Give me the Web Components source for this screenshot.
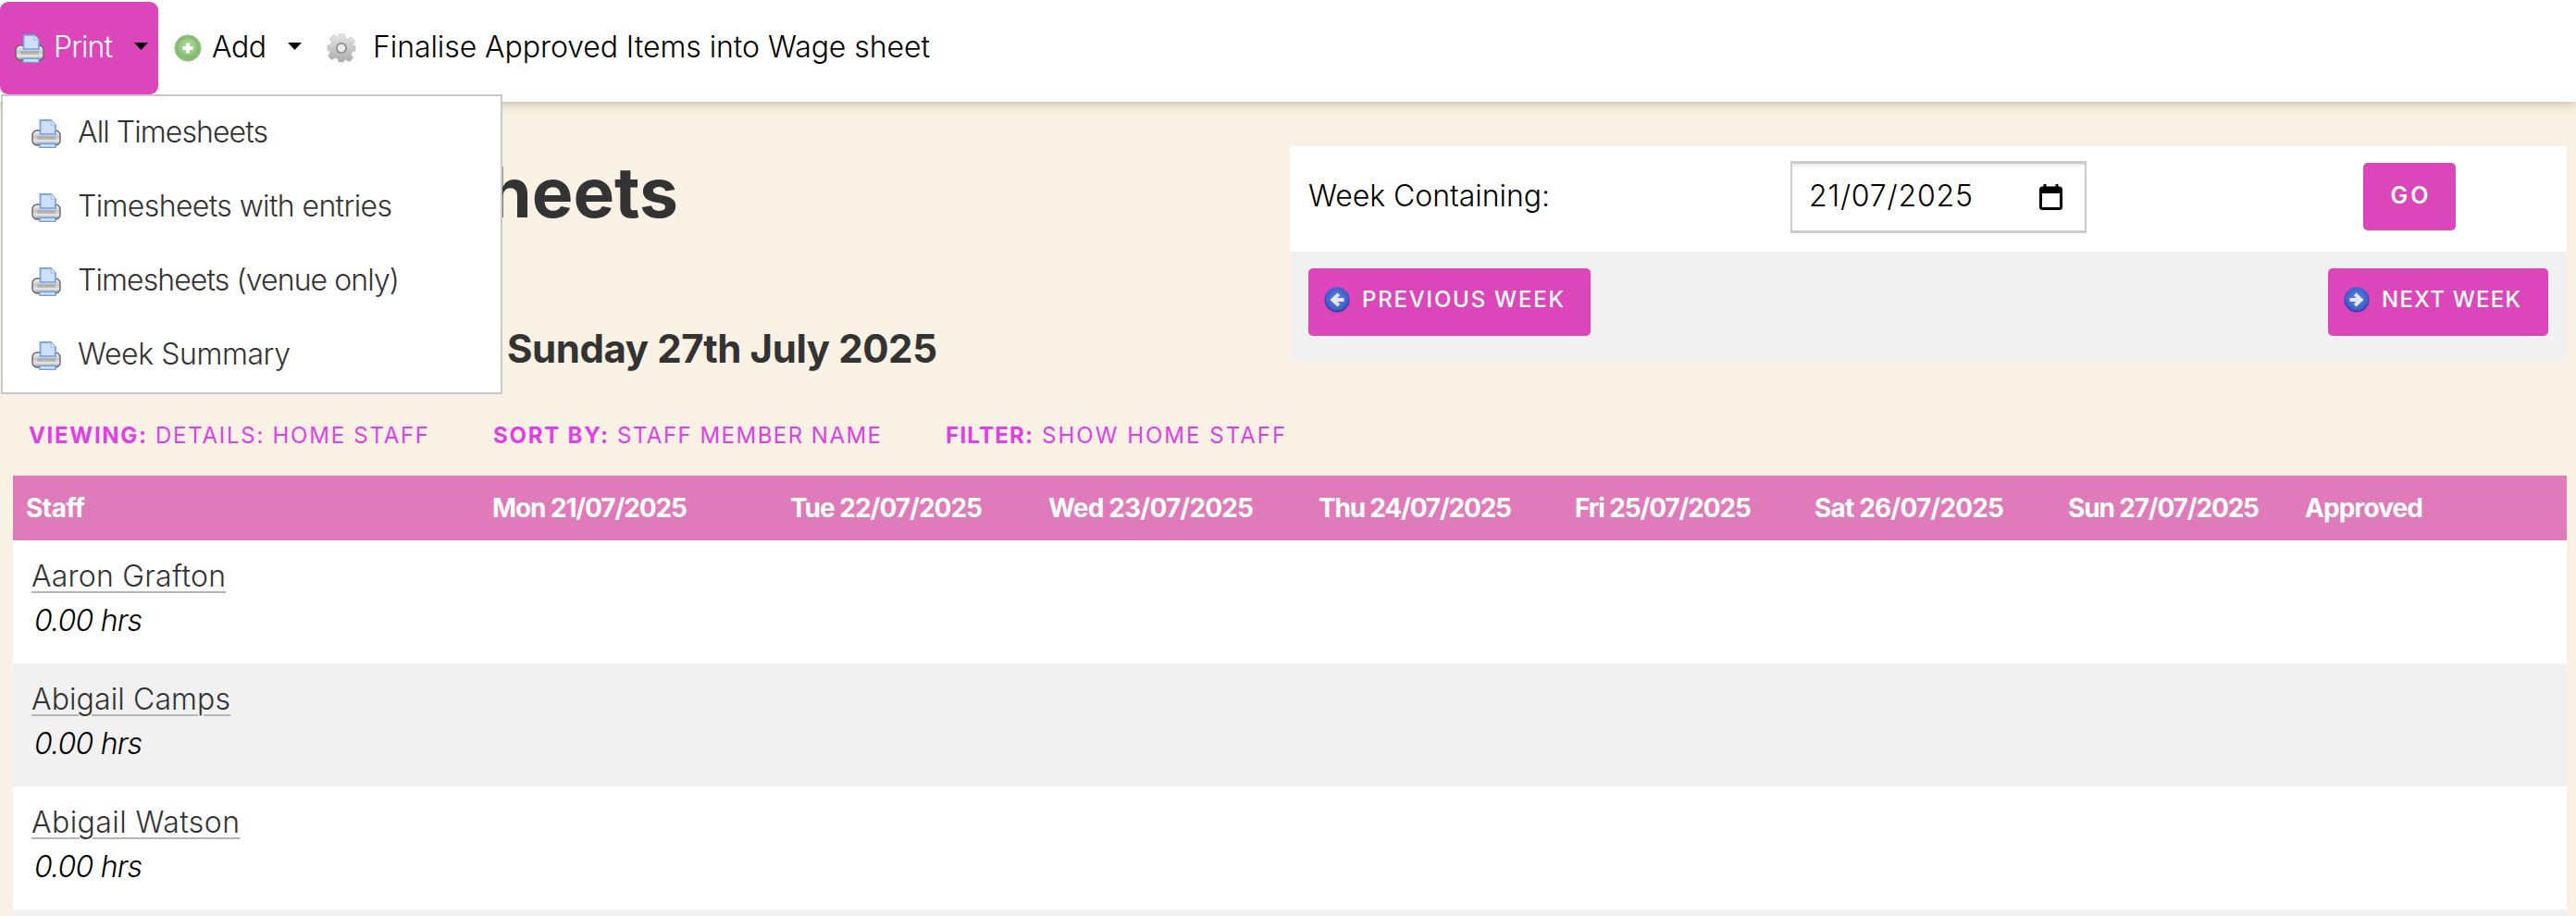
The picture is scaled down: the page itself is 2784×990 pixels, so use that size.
<!DOCTYPE html>
<html lang="en"><head><meta charset="utf-8"><title>Timesheets</title>
<style>
html,body{margin:0;padding:0;height:990px;overflow:hidden;background:#f9f1e4;font-family:Inter,"Liberation Sans",sans-serif;font-weight:400;color:#000}
</style></head><body>
<app-toolbar>
  <tool-button active icon="print" caret><x-t w="64">Print</x-t></tool-button>
  <tool-button icon="add" caret style="--ml:17px"><x-t w="59">Add</x-t></tool-button>
  <tool-button icon="gear" style="--ml:27px;--gap:18px"><x-t w="602">Finalise Approved Items into Wage sheet</x-t></tool-button>
  <drop-menu>
    <menu-row><x-t w="206">All Timesheets</x-t></menu-row>
    <menu-row><x-t w="340">Timesheets with entries</x-t></menu-row>
    <menu-row><x-t w="348">Timesheets (venue only)</x-t></menu-row>
    <menu-row><x-t w="230">Week Summary</x-t></menu-row>
  </drop-menu>
</app-toolbar>
<page-main>
  <top-section>
    <page-title>
      <x-t slot="h1">Staff Timesheets</x-t>
      <x-t slot="h2">Monday 21st July 2025 to <x-t w="465">Sunday 27th July 2025</x-t></x-t>
    </page-title>
    <week-panel>
      <x-t slot="label" w="261">Week Containing:</x-t>
      <date-box slot="date"><x-t w="177">21/07/2025</x-t></date-box>
      <action-button slot="go" plain><x-t w="41">GO</x-t></action-button>
      <action-button slot="prev" icon="left"><x-t w="218">PREVIOUS WEEK</x-t></action-button>
      <action-button slot="next" icon="right" style="padding-right:30px"><x-t w="150">NEXT WEEK</x-t></action-button>
    </week-panel>
  </top-section>
  <filter-bar>
    <filter-item><x-t slot="k" w="127">VIEWING:</x-t><x-t w="295">DETAILS: HOME STAFF</x-t></filter-item>
    <filter-item><x-t slot="k" w="124">SORT BY:</x-t><x-t w="285">STAFF MEMBER NAME</x-t></filter-item>
    <filter-item><x-t slot="k" w="94">FILTER:</x-t><x-t w="263">SHOW HOME STAFF</x-t></filter-item>
  </filter-bar>
  <staff-table>
    <table-head>
      <x-t w="64">Staff</x-t><x-t w="211">Mon 21/07/2025</x-t><x-t w="208">Tue 22/07/2025</x-t><x-t w="222">Wed 23/07/2025</x-t><x-t w="209">Thu 24/07/2025</x-t><x-t w="191">Fri 25/07/2025</x-t><x-t w="205">Sat 26/07/2025</x-t><x-t w="207">Sun 27/07/2025</x-t><x-t w="128">Approved</x-t>
    </table-head>
    <staff-row><x-t slot="name" w="210">Aaron Grafton</x-t><x-t slot="hours" w="117">0.00 hrs</x-t></staff-row>
    <staff-row alt><x-t slot="name" w="215">Abigail Camps</x-t><x-t slot="hours" w="117">0.00 hrs</x-t></staff-row>
    <staff-row><x-t slot="name" w="225">Abigail Watson</x-t><x-t slot="hours" w="117">0.00 hrs</x-t></staff-row>
    <staff-row alt style="height:7px;padding:0"></staff-row>
  </staff-table>
</page-main>
<script>
const ICONS={
print:()=>`<svg width="32" height="31" viewBox="0 0 32 31" style="filter:blur(.4px)"><defs><linearGradient id="b" x1="0" y1="0" x2="0" y2="1"><stop offset="0" stop-color="#f8f8f8"/><stop offset=".45" stop-color="#c4c4c4"/><stop offset=".7" stop-color="#e8e8e8"/><stop offset="1" stop-color="#8f8f8f"/></linearGradient></defs>
<rect x="1" y="12" width="30" height="16" rx="5" fill="url(#b)" stroke="#666" stroke-width="1.400"/>
<path d="M9.500 .8h11.500l5 5.200v10H9.500z" fill="#cfe0fa" stroke="#6f9fe2" stroke-width="1.700"/>
<path d="M21 1v5h5" fill="#eef4fd" stroke="#8fb4ea" stroke-width="1"/>
<rect x="6" y="18" width="20" height="4" fill="#8c8c8c" opacity=".4"/>
<rect x="9" y="26.500" width="17" height="3.800" fill="#dfe9f9" stroke="#6f9fe2" stroke-width="1.500"/></svg>`,
add:()=>`<svg width="30" height="30" viewBox="0 0 30 30" style="filter:blur(.4px)"><defs><radialGradient id="g" cx=".5" cy=".4" r=".6"><stop offset="0" stop-color="#b4d8a3"/><stop offset=".75" stop-color="#93c77f"/><stop offset="1" stop-color="#7db368"/></radialGradient></defs>
<circle cx="15" cy="15" r="14.200" fill="#86bd72" stroke="#a7cf97" stroke-width="1"/><circle cx="15" cy="15" r="10.500" fill="url(#g)"/>
<path d="M15 9.500v11M9.500 15h11" stroke="#fff" stroke-width="3.800"/></svg>`,
gear:()=>`<svg width="32" height="32" viewBox="0 0 32 32" style="filter:blur(.4px)"><defs><linearGradient id="g" x1="0" y1="0" x2="0" y2="1"><stop offset="0" stop-color="#e6e6e6"/><stop offset="1" stop-color="#ababab"/></linearGradient></defs>
<path fill="url(#g)" stroke="#b8b8b8" stroke-width=".6" d="M13 1h6l1 4.200 2.600 1.100 3.700-2.300 4.200 4.200-2.300 3.700 1.100 2.600L31 13v6l-3.500 1.200-1.100 2.600 2.300 3.700-4.200 4.200-3.700-2.300-2.600 1.100L19 31h-6l-1-3.500-2.600-1.100-3.700 2.300-4.200-4.200 2.300-3.700-1.100-2.600L1 19v-6l3.500-1 1.100-2.600-2.300-3.700 4.200-4.200 3.700 2.300 2.600-1.100z"/>
<circle cx="16" cy="16" r="6" fill="#8f8f8f"/><circle cx="16" cy="16" r="4.200" fill="#ececec"/></svg>`,
left:()=>arrow('M23 15H11M17 8.500 10 15l7 6.500'),
right:()=>arrow('M7 15h12M13 8.500 20 15l-7 6.500'),
cal:()=>`<svg width="25" height="28" viewBox="0 0 25 28"><path d="M6 0v4M19 0v4" stroke="#000" stroke-width="3"/><rect x="1.500" y="4" width="22" height="22.500" rx="2" fill="#fff" stroke="#000" stroke-width="3"/><rect x="1.500" y="4" width="22" height="6" fill="#000"/></svg>`
};
function arrow(d){return `<svg width="28" height="28" viewBox="0 0 30 30" style="filter:blur(.35px)"><defs><radialGradient id="a" cx=".5" cy=".45" r=".55"><stop offset="0" stop-color="#5f86e8"/><stop offset=".8" stop-color="#3e5fc9"/><stop offset="1" stop-color="#2c2f8f"/></radialGradient></defs><circle cx="15" cy="15" r="14.500" fill="url(#a)"/><path d="${d}" fill="none" stroke="#e6e6ec" stroke-width="4.200"/></svg>`}
const caret=`<svg width="15" height="8" viewBox="0 0 15 8"><path d="M0 0h15L7.500 8z" fill="#000"/></svg>`;
function def(name,html){customElements.define(name,class extends HTMLElement{constructor(){super();this.attachShadow({mode:'open'}).innerHTML=html;}});}

def('app-toolbar',`<style>:host{display:flex;position:relative;height:110px;background:#fff;box-shadow:0 3px 10px rgba(90,70,40,.28);align-items:flex-start;z-index:5}</style><slot></slot>`);

customElements.define('tool-button',class extends HTMLElement{
 connectedCallback(){if(this.shadowRoot)return;const r=this.attachShadow({mode:'open'});
  const active=this.hasAttribute('active');
  r.innerHTML=`<style>:host{display:flex;align-items:center;height:100px;margin-top:2px;margin-left:var(--ml,0);font-size:32px;font-weight:300;color:${active?'#fff':'#000'};box-sizing:border-box;${active?'background:#dc46bb;border-radius:9px;width:171px;padding-left:16px;':''}}
  ::slotted(*){margin-bottom:3px}
  .i{display:flex;margin-right:var(--gap,${active?'10px':'11px'});}.c{display:flex;margin-left:23px;margin-top:-4px}</style>
  <span class="i">${ICONS[this.getAttribute('icon')]()}</span><slot></slot>${this.hasAttribute('caret')?`<span class="c">${caret}</span>`:''}`;}
});

def('drop-menu',`<style>:host{display:block;position:absolute;left:1px;top:102px;width:542px;height:324px;box-sizing:border-box;background:#fff;border:2px solid #c8c8c8;padding:0;color:#333;font-size:32px;font-weight:300;z-index:10}</style><slot></slot>`);
def('menu-row',`<style>:host{display:flex;align-items:center;height:80px;padding-left:31px}.i{display:flex;margin-right:18px}::slotted(*){margin-bottom:3px}</style><span class="i">${ICONS.print()}</span><slot></slot>`);

def('page-main',`<style>:host{display:block;height:880px;box-sizing:border-box;overflow:hidden;padding:48px 10px 0 14px}</style><slot></slot>`);
def('top-section',`<style>:host{display:flex;height:233px}</style><slot></slot>`);
def('page-title',`<style>:host{display:block;flex:1;padding:14px 0 0 18px;color:#333;font-weight:700}
 .a{display:flex;justify-content:flex-end;width:701px;font-size:75px;line-height:72px;height:72px}
 .b{display:flex;justify-content:flex-end;width:981px;font-size:42px;line-height:50px;margin-top:108px}</style>
 <div class="a"><slot name="h1"></slot></div><div class="b"><slot name="h2"></slot></div>`);
def('week-panel',`<style>:host{display:block;width:1380px;font-size:32px;font-weight:300}
 .r1{display:flex;height:114px;background:#fff;box-sizing:border-box;padding:16px 0 0 20px}
 .l{display:flex;align-items:center;width:521px;height:75px}
 .g{margin-left:299px;margin-top:2px}
 .r2{display:flex;justify-content:space-between;height:119px;background:#f1f1f1;box-sizing:border-box;padding:18px 20px}</style>
 <div class="r1"><div class="l"><slot name="label"></slot></div><slot name="date"></slot><div class="g"><slot name="go"></slot></div></div>
 <div class="r2"><slot name="prev"></slot><slot name="next"></slot></div>`);
def('date-box',`<style>:host{display:flex;align-items:center;width:320px;height:78px;box-sizing:border-box;background:#fff;border:2px solid #cbcbcb;border-top-width:3px;border-bottom-width:3px;box-shadow:inset 0 4px 4px -2px rgba(0,0,0,.1);padding:0 24px 0 18px;justify-content:space-between}.c{display:flex}::slotted(*){margin-bottom:3px}</style><slot></slot><span class="c">${ICONS.cal()}</span>`);
customElements.define('action-button',class extends HTMLElement{connectedCallback(){if(this.shadowRoot)return;const r=this.attachShadow({mode:'open'});
 const ic=this.getAttribute('icon');
 r.innerHTML=`<style>:host{display:flex;align-items:center;height:73px;box-sizing:border-box;background:#dc46bb;color:#fff;border-radius:5px;font-size:24px;font-weight:500;${ic?'padding:0 29px 6px 17px':'width:100px;padding:0 0 3px;justify-content:center;font-size:25px;font-weight:600'}}.i{display:flex;margin-right:13px}</style>${ic?`<span class="i">${ICONS[ic]()}</span>`:''}<slot></slot>`;}});

def('filter-bar',`<style>:host{display:flex;gap:70px;height:36px;align-items:center;margin:61px 0 26px;padding-left:17px;color:#e03fe6;font-size:24px;font-weight:400}</style><slot></slot>`);
def('filter-item',`<style>:host{display:flex;align-items:center;gap:10px}.k{font-weight:700;display:flex}</style><span class="k"><slot name="k"></slot></span><slot></slot>`);
def('staff-table',`<style>:host{display:block}</style><slot></slot>`);
def('table-head',`<style>:host{display:grid;grid-template-columns:504px 322px 279px 292px 277px 259px 274px 256px 297px;height:70px;align-items:center;justify-items:start;background:#e07bbb;color:#fff;font-size:28px;font-weight:700;box-sizing:border-box;padding:0}
 ::slotted(*){margin-left:14px}</style><slot></slot>`);
customElements.define('staff-row',class extends HTMLElement{connectedCallback(){if(this.shadowRoot)return;const r=this.attachShadow({mode:'open'});
 r.innerHTML=`<style>:host{display:block;height:133px;box-sizing:border-box;background:${this.hasAttribute('alt')?'#f1f1f1':'#fff'};padding:15px 0 0 20px;font-size:32px;font-weight:300}
 .n{height:48px;line-height:48px;color:#333}.h{height:48px;line-height:48px;font-style:italic;color:#000;padding-left:3px}
 ::slotted([slot=name]){text-decoration:underline;text-decoration-color:#b5b5b5;text-decoration-thickness:2px;text-underline-offset:5px}</style>
 <div class="n"><slot name="name"></slot></div><div class="h"><slot name="hours"></slot></div>`;}});

/* x-t: a run of real text tracked to a given width; defined last so inherited fonts are in place when measured */
customElements.define('x-t',class extends HTMLElement{connectedCallback(){
 if(!this.shadowRoot){this.attachShadow({mode:'open'}).innerHTML=`<style>:host{display:inline-block;white-space:nowrap}</style><slot></slot>`;}
 const w=+this.getAttribute('w');const n=this.textContent.length;
 if(!w||n<2)return;
 const cur=this.getBoundingClientRect().width;
 if(cur){const ls=(w-cur)/(n-1);this.style.letterSpacing=ls.toFixed(3)+'px';this.style.marginRight=(-ls).toFixed(3)+'px';}
}});
</script>
</body></html>
